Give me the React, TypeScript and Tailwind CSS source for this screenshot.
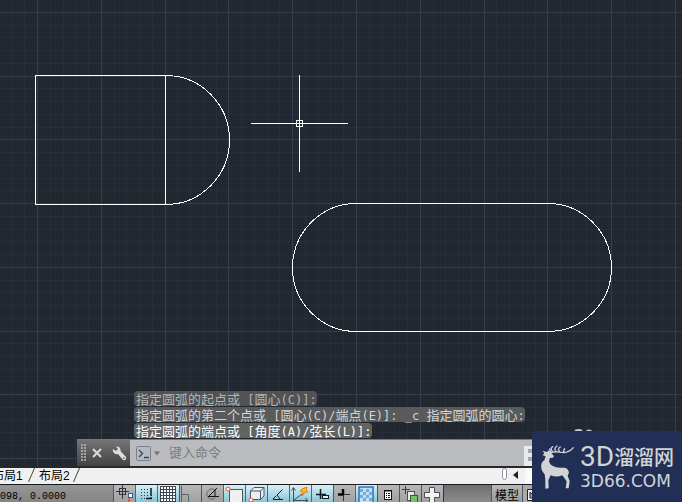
import type { ReactNode } from "react";

const GRID_STEPS = Array.from({ length: 152 }, (_, i) => i - 3);

function Drawing() {
  return (
    <svg className="block h-full w-full" shapeRendering="crispEdges" fill="none" aria-label="绘图区">
      {[false, true].map((major) =>
        GRID_STEPS.filter((n) => (n % 5 === 0) === major).map((n) => {
          const x = Math.round(37 + n * 12.76) + 0.5;
          const y = Math.round(12 + n * 12.74) + 0.5;
          return (
            <g key={n} stroke={major ? "#363d4f" : "#272e39"}>
              <line x1={x} x2={x} y1="0" y2="100%" />
              <line y1={y} y2={y} x1="0" x2="100%" />
            </g>
          );
        })
      )}
      <g stroke="#ffffff">
        <path d="M165.5 75.5H35.5V204.5H165.5V75.5A64 64.5 0 0 1 165.5 204.5" />
        <rect x="292.5" y="203.5" width="319" height="128" rx="64" />
        <path d="M251 123.5H348M299.5 75V172M296.5 120.5H302.5V126.5H296.5Z" />
      </g>
    </svg>
  );
}

function MixedText({ text }: { text: string }) {
  return (
    <>
      {text.split(/([\u4e00-\u9fff]+)/).map((run, i) => (
        <span key={i} className={i % 2 ? "text-[13px]" : "text-xs"}>
          {run}
        </span>
      ))}
    </>
  );
}

const HISTORY = [
  { text: "指定圆弧的起点或 [圆心(C)]:", tone: "bg-[#505254] text-[#b4b5b6]" },
  { text: "指定圆弧的第二个点或 [圆心(C)/端点(E)]: _c 指定圆弧的圆心:", tone: "bg-[#585a5b] text-[#d4d4d4]" },
  { text: "指定圆弧的端点或 [角度(A)/弦长(L)]:", tone: "bg-[#626363] text-white" },
];

function CommandLine() {
  return (
    <div className="absolute bottom-0 left-[77px] right-0">
      <ol className="mb-px ml-[57px] flex flex-col items-start gap-px font-['DejaVu_Sans_Mono','Noto_Sans_CJK_SC',monospace]">
        {HISTORY.map((line) => (
          <li key={line.text} className={`h-[15px] whitespace-pre rounded-sm pl-0.5 leading-[15px] ${line.tone}`}>
            <MixedText text={line.text} />
          </li>
        ))}
      </ol>
      <div className="flex h-[27px] border-t border-[#77797b] bg-[#c6c7c9]/93">
        <div className="flex w-[53px] items-center bg-linear-to-b from-[#747474] to-[#434343] pl-1">
          <svg width="6" height="18" fill="#a5a5a5" shapeRendering="crispEdges" aria-hidden="true">
            {[0, 3, 6, 9, 12, 15].map((y) => (
              <path key={y} d={`M0 ${y}h2v2h-2zM3 ${y}h2v2h-2z`} />
            ))}
          </svg>
          <button aria-label="关闭" className="ml-1 flex h-5 w-3 items-center justify-center">
            <svg width="10" height="10" stroke="#dcdcdc" strokeWidth="2">
              <path d="M1 1L9 9M9 1L1 9" />
            </svg>
          </button>
          <button aria-label="自定义" className="ml-2 flex h-5 w-4 items-center justify-center">
            <svg width="15" height="15" viewBox="0 0 15 15" fill="#dddddd">
              <path d="M1 3L4 5L6 3L4 0.5C7 0 9 2 8.500 5L14 11C15 13 13 15 11 14L6 8C3 9 0 6 1 3ZM12 11.500A.8.8 0 1 0 12.100 13A.8.8 0 0 0 12 11.500Z" fillRule="evenodd" />
            </svg>
          </button>
        </div>
        <div className="flex min-w-0 flex-1 items-center pl-1.5">
          <svg width="27" height="15" viewBox="0 0 27 15" fill="none" aria-hidden="true">
            <rect x=".5" y=".5" width="14" height="14" rx="1" fill="#b2bac4" stroke="#79818c" />
            <path d="M3 4L6.500 7.500L3 11M8 11.500H13" stroke="#3e4651" strokeWidth="1.300" />
            <path d="M18 5.500h6l-3 4z" fill="#707173" />
          </svg>
          <input
            aria-label="命令"
            placeholder="键入命令"
            className="mb-0.5 ml-1.5 min-w-0 flex-1 bg-transparent font-['Noto_Sans_CJK_SC',sans-serif] text-[13px] leading-5 outline-none placeholder:text-[#7c7d7f]"
          />
        </div>
        <button aria-label="最近命令" className="mt-1.5 w-[158px] bg-[#e9eaeb] pl-1">
          <svg width="10" height="14" fill="#a4a6a8" shapeRendering="crispEdges">
            <path d="M0 0h10v4H0zM0 8h10v4H0z" />
          </svg>
        </button>
      </div>
    </div>
  );
}

function LayoutTabs() {
  return (
    <nav className="flex h-[18px] shrink-0 items-start overflow-hidden border-t-2 border-[#25282c] bg-[#f0f0f0] font-['Liberation_Sans','Noto_Sans_CJK_SC',sans-serif] text-xs leading-4 text-black">
      <button className="-ml-2 w-[37px] shrink-0 whitespace-nowrap text-left leading-4">布局1</button>
      <TabEdge />
      <button className="w-[37px] shrink-0 whitespace-nowrap pl-0.5 text-left leading-4">布局2</button>
      <TabEdge />
      <span className="ml-auto h-3 w-[5px] rounded-sm border border-[#8e9498] bg-white" />
      <button aria-label="向左滚动" className="ml-1.5 flex h-[13px] w-3 items-center">
        <svg width="5" height="8">
          <path d="M5 0V8L0 4Z" fill="#222222" />
        </svg>
      </button>
      <span className="h-4 w-[157px] bg-[#fafafa]" />
    </nav>
  );
}

function TabEdge() {
  return (
    <svg className="-ml-0.5 mr-0.5 block shrink-0" width="8" height="15" fill="none" aria-hidden="true">
      <path d="M1.500 14L7.500 0" stroke="#444444" />
    </svg>
  );
}

const TOOLS: { name: string; on?: boolean; art: ReactNode }[] = [
  {
    name: "推断约束",
    art: (
      <>
        <path d="M8.500 0v14M2 6.500h13" stroke="#30343b" />
        <rect x="5.500" y="3.500" width="6" height="6" stroke="#30343b" />
        <path d="M15 10v8" stroke="#de6431" strokeWidth="2" />
        <rect x="14.500" y="8.500" width="4" height="4" fill="#ffffff" stroke="#2368a6" />
      </>
    ),
  },
  {
    name: "捕捉模式",
    on: true,
    art: (
      <>
        <path d="M5 4.500h8M5 7.500h8M5 10.500h8M5 13.500h4" stroke="#303945" strokeDasharray="1 2" />
        <path d="M15 3v8M10 13.500h6M15 12v2" stroke="#101820" strokeWidth="1.500" />
      </>
    ),
  },
  {
    name: "栅格显示",
    on: true,
    art: (
      <>
        <rect x="2" y="1" width="16" height="17" fill="#ffffff" />
        <path d="M2.500 1v17M5.500 1v17M8.500 1v17M11.500 1v17M14.500 1v17M17.500 1v17M2 1.500h16M2 4.500h16M2 7.500h16M2 10.500h16M2 13.500h16M2 16.500h16" stroke="#3c4552" />
      </>
    ),
  },
  { name: "正交模式", art: <path d="M1.500 1v16M2 9.500h6.500v8" stroke="#596270" /> },
  {
    name: "极轴追踪",
    art: (
      <>
        <path d="M13 5a5 5 0 1 0 0 8" stroke="#666666" />
        <path d="M6 12L15 3M6 11.500h11M13 5v7" stroke="#111111" />
      </>
    ),
  },
  {
    name: "对象捕捉",
    on: true,
    art: (
      <>
        <rect x="5.500" y="4.500" width="13" height="16" fill="#f0f0f0" stroke="#505866" />
        <circle cx="4" cy="4" r="2" fill="#ffffff" stroke="#e5572d" />
      </>
    ),
  },
  {
    name: "三维对象捕捉",
    on: true,
    art: (
      <>
        <path d="M4.500 6L8 2.500h10V11L14.500 14.500H4.500ZM4.500 6H14.500V14.500M14.500 6L18 2.500" fill="#eceef2" stroke="#4c5365" />
        <circle cx="5" cy="15" r="2" fill="#ffffff" stroke="#e5572d" />
      </>
    ),
  },
  {
    name: "对象捕捉追踪",
    on: true,
    art: (
      <>
        <path d="M14.500 4.500L5 14" stroke="#151c24" strokeDasharray="8 1" />
        <path d="M5 14.500H15M9 10l3 4" stroke="#151c24" />
      </>
    ),
  },
  {
    name: "动态 UCS",
    on: true,
    art: (
      <>
        <path d="M3.500 17V3M1.500 5.500l2-3l2 3M4 15L12 9M4 15.500h13M15 13l3 2.500l-3 2" stroke="#3c506a" />
        <path d="M12 4L17 2L16 5L18 7L15 7L12 11L13 7L10 6Z" fill="#ffbd29" stroke="#df7e09" />
      </>
    ),
  },
  {
    name: "动态输入",
    on: true,
    art: (
      <>
        <path d="M8.500 4v10M4 9.500h10" stroke="#111820" strokeWidth="1.500" />
        <rect x="10.500" y="10.500" width="6" height="3" fill="#dff1f6" stroke="#111820" />
      </>
    ),
  },
  {
    name: "线宽",
    art: (
      <>
        <path d="M9 4v6M4 9.500h6" stroke="#080808" strokeWidth="2.500" />
        <path d="M9.500 10v6M10 9.500h6" stroke="#333333" />
      </>
    ),
  },
  {
    name: "透明度",
    on: true,
    art: (
      <>
        <rect x="3" y="2" width="14" height="17" fill="#c3e1f5" stroke="#2873b8" strokeWidth="1.500" />
        {[4, 7, 10, 13].map((y, row) => (
          <path key={y} d={row % 2 ? `M7 ${y}h3v3h-3zM13 ${y}h3v3h-3z` : `M4 ${y}h3v3h-3zM10 ${y}h3v3h-3z`} fill="#72acd8" />
        ))}
      </>
    ),
  },
  {
    name: "快捷特性",
    art: (
      <>
        <rect x="6.500" y="5.500" width="7" height="9" fill="#ffffff" stroke="#111111" />
        <path d="M7 6h6M8 8.500h1M10 8.500h2M8 10.500h1M10 10.500h2M8 12.500h1M10 12.500h2" stroke="#111111" />
      </>
    ),
  },
  {
    name: "选择循环",
    art: (
      <>
        <path d="M5.500 1v8M2 4.500H10" stroke="#384252" />
        <rect x="7.500" y="6.500" width="7" height="9" fill="#e5e7eb" stroke="#4a5260" />
        <rect x="10.500" y="10.500" width="7" height="8" fill="#78bd69" stroke="#27602e" />
      </>
    ),
  },
  {
    name: "注释监视器",
    art: <path d="M7.500 2.500h5v5h5v5h-5v5h-5v-5h-5v-5h5z" fill="#f2f2f2" stroke="#47505e" />,
  },
];

function StatusBar() {
  return (
    <footer className="flex h-[18px] shrink-0 overflow-hidden border-t border-[#171a1e] bg-[#8b8b8b]">
      <output className="w-[113px] shrink-0 overflow-hidden whitespace-pre bg-linear-to-b from-[#959595] to-[#858585] pt-1 font-['Liberation_Mono',monospace] text-[10px] leading-4 text-black">
        098, 0.0000
      </output>
      {TOOLS.map((tool) => (
        <button
          key={tool.name}
          aria-label={tool.name}
          aria-pressed={!!tool.on}
          className={`h-[22px] w-[22px] shrink-0 border-l ${
            tool.on
              ? "border-[#4f6770] bg-linear-to-b from-[#daf0f5] to-[#6fb7ce]"
              : "border-[#555555] bg-linear-to-b from-[#b8b8b8] to-[#999999]"
          }`}
        >
          <svg className="block" width="21" height="22" fill="none">
            {tool.art}
          </svg>
        </button>
      ))}
      <div className="min-w-0 flex-1 border-l border-[#333333] bg-linear-to-b from-[#6f6f6f] to-[#8b8b8b]" />
      <button className="flex h-[18px] w-[31px] shrink-0 items-start justify-center whitespace-nowrap border-l border-[#555555] bg-linear-to-b from-[#b8b8b8] to-[#999999] pt-1 font-['Noto_Sans_CJK_SC',sans-serif] text-xs leading-3 text-black">
        模型
      </button>
      <button aria-label="快速查看布局" className="flex h-[22px] w-40 shrink-0 items-start border-l border-[#555555] bg-[#a9a9a9] pl-1 pt-1">
        <svg width="14" height="12" fill="#eeeeee" stroke="#222222">
          <path d="M.5.5h13v11H.5zM3 3v6h6zM3 3l6 6" />
        </svg>
      </button>
    </footer>
  );
}

function Watermark() {
  return (
    <aside className="absolute bottom-0 right-0 flex h-[71px] w-[150px] bg-[#212f56] text-[#d2d3d5]">
      <svg className="absolute -top-0.5 left-[42px]" width="20" height="2" fill="#c5c8cc" aria-hidden="true">
        <ellipse cx="4.500" cy="2" rx="4" ry="2" />
        <ellipse cx="15" cy="2.500" rx="3" ry="2" />
      </svg>
      <svg className="shrink-0" width="46" height="71" viewBox="0 18 138 213" aria-hidden="true">
        <path
          fill="currentColor"
          d="M31 77L45 81L50 76L60 86L66 94L61 99L54 98L51 108Q53 119 64 124Q78 130 98 128Q108 130 111 142L107 153L113 168L110 190L101 190L104 169L91 151Q74 158 56 151L49 166L50 190L40 191L40 164L38 148Q25 135 28 118Q29 110 37 106L41 94L32 91L37 84Z"
        />
        <path
          fill="none"
          stroke="currentColor"
          strokeWidth="4"
          strokeLinecap="round"
          d="M54 83Q72 79 90 82Q108 86 124 68M56 82L53 72M61 79Q54 70 62 65M72 80Q64 70 75 63M83 80Q75 71 85 66M97 83Q92 77 98 71M106 80L116 76"
        />
      </svg>
      <div className="flex flex-col whitespace-nowrap pl-0.5 pt-3">
        <p className="flex h-7 items-center">
          <span className="font-['Roboto',sans-serif] text-[28px] leading-7">3D</span>
          <span className="font-['Noto_Sans_CJK_SC',sans-serif] text-[20px] font-medium leading-7">溜溜网</span>
        </p>
        <p className="font-['DejaVu_Sans',sans-serif] text-[17px] leading-5">3D66.COM</p>
      </div>
    </aside>
  );
}

export default function App() {
  return (
    <div className="relative flex h-screen flex-col overflow-hidden bg-[#212830]">
      <main className="relative min-h-0 flex-1 overflow-hidden">
        <Drawing />
        <CommandLine />
      </main>
      <LayoutTabs />
      <StatusBar />
      <Watermark />
    </div>
  );
}
